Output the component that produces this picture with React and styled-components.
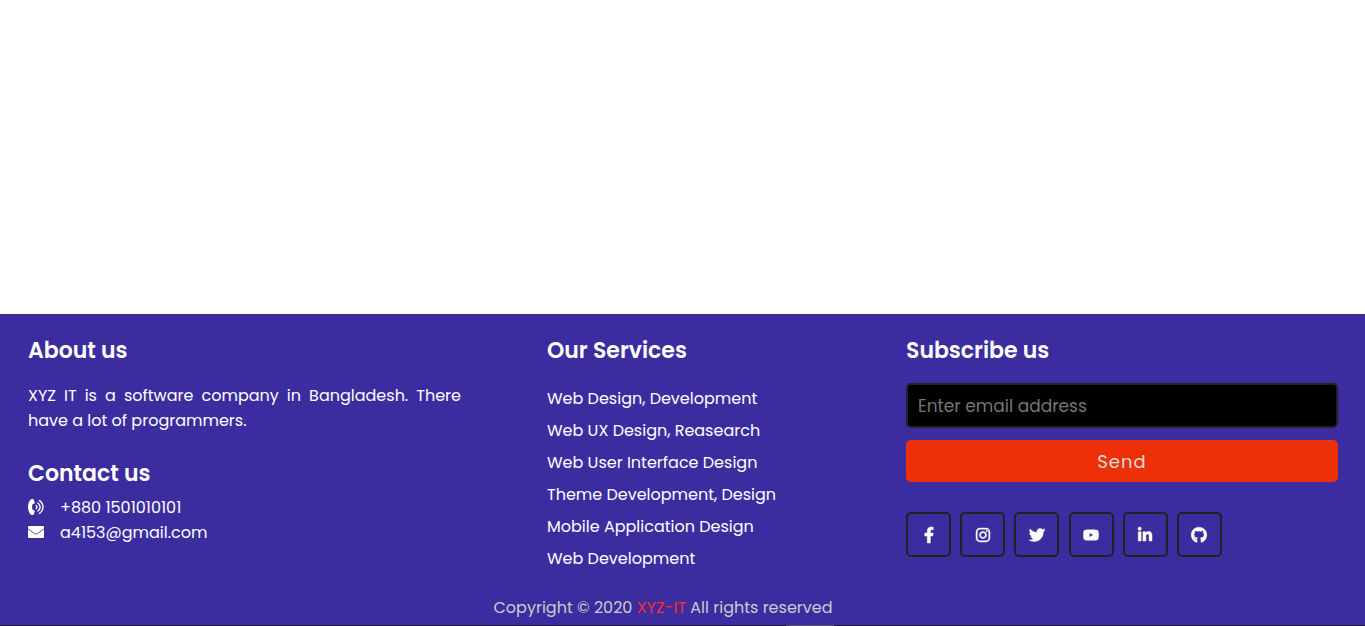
import React from "react";
import styled, { createGlobalStyle } from "styled-components";
import { FaFacebookF, FaInstagram, FaTwitter, FaYoutube, FaLinkedinIn, FaGithub } from "react-icons/fa";

const GlobalStyle = createGlobalStyle`
  *, *::before, *::after { box-sizing: border-box; margin: 0; padding: 0; }
  body, input, button { font-family: Poppins, Inter, "Open Sans", sans-serif; }
  body { background: #fff; }
`;

const Page = styled.div`
  min-height: 100vh;
  display: flex;
  flex-direction: column;
`;

const Main = styled.main`
  flex: 1;
`;

const Footer = styled.footer`
  background: #3b2d9f;
  color: #fff;
`;

const Columns = styled.div`
  display: grid;
  grid-template-columns: 433fr 273fr 432fr;
  column-gap: 86px;
  padding: 21px 27px 0 28px;
`;

const Heading = styled.h2`
  font-size: 22px;
  line-height: 32px;
  font-weight: 600;
  margin-bottom: ${(p) => p.$gap}px;
`;

const About = styled.p`
  font-size: 16px;
  line-height: 25px;
  text-align: justify;
  margin-bottom: 25px;
`;

const ContactRow = styled.a`
  display: flex;
  align-items: center;
  gap: 16px;
  font-size: 16px;
  line-height: 25px;
  color: #fff;
  text-decoration: none;

  svg { margin-bottom: 1px; }
`;

const Services = styled.ul`
  list-style: none;
`;

const ServiceLink = styled.a`
  display: block;
  font-size: 16px;
  line-height: 32px;
  color: #fff;
  text-decoration: none;
  white-space: nowrap;
`;

const Form = styled.form`
  display: grid;
  gap: 12px;
  margin-bottom: 30px;
`;

const EmailInput = styled.input`
  width: 100%;
  height: 45px;
  padding: 0 10px;
  font-size: 17px;
  color: #fff;
  background: #000;
  border: 2px solid #222;
  border-radius: 5px;
  &::placeholder { color: #757575; }
`;

const SendButton = styled.button`
  height: 42px;
  font-size: 18px;
  letter-spacing: 1px;
  color: #ddd;
  background: #ed3008;
  border: 0;
  border-radius: 5px;
`;

const Socials = styled.nav`
  display: flex;
  justify-content: space-between;
  max-width: 316px;
`;

const SocialLink = styled.a`
  display: grid;
  place-items: center;
  width: 45px;
  height: 45px;
  color: #fff;
  font-size: 16px;
  border: 2px solid #222;
  border-radius: 5px;

  svg { width: auto; height: 1em; overflow: visible; }
  path { stroke: currentColor; stroke-width: 14; }
`;

const Copyright = styled.p`
  padding: 17px 39px 1px 0;
  text-align: center;
  font-size: 16px;
  line-height: 32px;
  color: #ccc;
`;

const Brand = styled.a`
  color: #fc2b2b;
  text-decoration: none;
`;

const BottomEdge = styled.div`
  height: 1px;
  padding-left: 57.6%;
  background: #1c1838;
`;

const EdgeMarker = styled.div`
  width: 48px;
  height: 1px;
  background: #56545f;
`;

const PhoneIcon = () => (
  <svg width="16" height="16" viewBox="0 0 16 16" fill="currentColor" aria-hidden="true">
    <path d="M2.5.6 4.600.1C5 0 5.400.2 5.600.6L6.700 3.400c.1.4 0 .8-.4 1.100L4.600 5.300a7.500 7.500 0 0 0 0 5.400l1.700.8c.4.3.5.7.4 1.100L5.600 15.400c-.2.4-.6.6-1 .5L2.500 15.400C-.8 11-.8 5 2.500.6Z" />
    <g fill="none" stroke="currentColor" strokeWidth="1.400" strokeLinecap="round">
      <path d="M8.200 6.500a1.900 1.900 0 0 1 0 3" />
      <path d="M9.900 4a4.800 4.800 0 0 1 0 8" />
      <path d="M11.600 1.600a7.800 7.800 0 0 1 0 12.800" />
    </g>
  </svg>
);

const EnvelopeIcon = () => (
  <svg width="16" height="16" viewBox="0 0 16 16" aria-hidden="true">
    <rect y="2" width="16" height="12" rx="1" fill="currentColor" />
    <path d="M0 4.800 6.500 9.600q1.500 1 3 0L16 4.800" fill="none" stroke="#3b2d9f" strokeWidth=".8" />
  </svg>
);

const services = [
  "Web Design, Development",
  "Web UX Design, Reasearch",
  "Web User Interface Design",
  "Theme Development, Design",
  "Mobile Application Design",
  "Web Development",
];

const socials = [
  ["Facebook", FaFacebookF],
  ["Instagram", FaInstagram],
  ["Twitter", FaTwitter],
  ["YouTube", FaYoutube],
  ["LinkedIn", FaLinkedinIn],
  ["GitHub", FaGithub],
];

export default function App() {
  return (
    <Page>
      <GlobalStyle />
      <Main />
      <Footer>
        <Columns>
          <section>
            <Heading $gap={16}>About us</Heading>
            <About>XYZ IT is a software company in Bangladesh. There have a lot of programmers.</About>
            <Heading $gap={5}>Contact us</Heading>
            <ContactRow href="tel:+8801501010101"><PhoneIcon />+880 1501010101</ContactRow>
            <ContactRow href="mailto:a4153@gmail.com"><EnvelopeIcon />a4153@gmail.com</ContactRow>
          </section>
          <section>
            <Heading $gap={16}>Our Services</Heading>
            <Services>
              {services.map((name) => (
                <li key={name}><ServiceLink href="#">{name}</ServiceLink></li>
              ))}
            </Services>
          </section>
          <section>
            <Heading $gap={16}>Subscribe us</Heading>
            <Form onSubmit={(e) => e.preventDefault()}>
              <EmailInput type="email" aria-label="Email address" placeholder="Enter email address" />
              <SendButton type="submit">Send</SendButton>
            </Form>
            <Socials>
              {socials.map(([name, Icon]) => (
                <SocialLink key={name} href="#" aria-label={name}><Icon /></SocialLink>
              ))}
            </Socials>
          </section>
        </Columns>
        <Copyright>Copyright © 2020 <Brand href="#">XYZ-IT</Brand> All rights reserved</Copyright>
        <BottomEdge><EdgeMarker /></BottomEdge>
      </Footer>
    </Page>
  );
}
